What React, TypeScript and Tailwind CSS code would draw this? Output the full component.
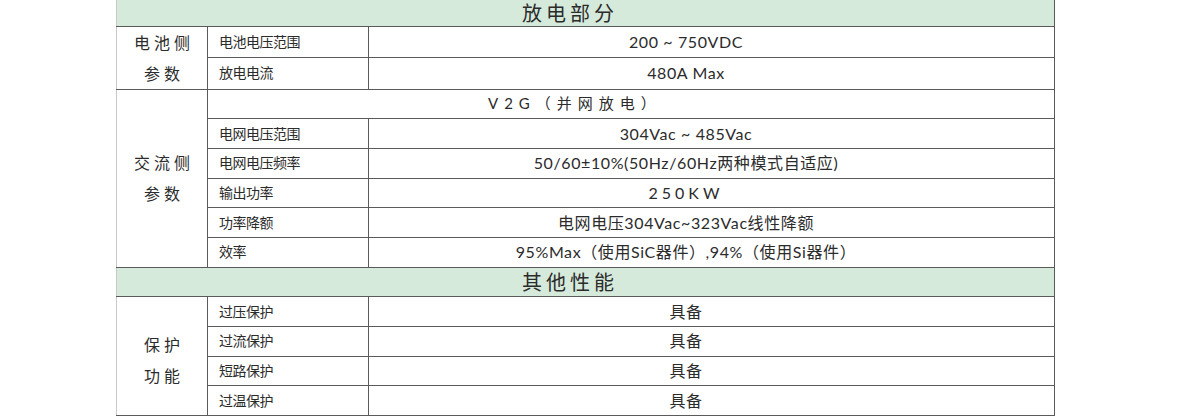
import React from 'react';

const font = { fontFamily: '"Lato", "Noto Sans CJK SC", sans-serif' };

const line = "border border-[#5a5a5a]";

const Header = ({ title, first }: { title: string; first?: boolean }) => (
  <tr className={first ? "h-[26px]" : "h-[29.7px]"}>
    <td colSpan={3} className={`${line} border-l-[#c8c8c8] ${first ? "border-t-0" : ""} bg-[#d6eadb] text-center text-[20px] tracking-[4px] pr-[31px] leading-none`}>
      {title}
    </td>
  </tr>
);

const Row = ({ label, value, group }: { label: string; value: React.ReactNode; group?: React.ReactNode }) => (
  <tr className="h-[29.7px]">
    {group}
    <td className={`${line} pl-[11px] text-[14px] tracking-[-0.5px] leading-none`}>{label}</td>
    <td className={`${line} text-center text-[16px] tracking-[0.6px] pr-[51px] leading-none`}>{value}</td>
  </tr>
);

const Group = ({ rows, lines, className = "" }: { rows: number; lines: string[]; className?: string }) => (
  <td rowSpan={rows} className={`${line} border-l-[#c8c8c8] text-center text-[16px] tracking-[4px] leading-[31px] align-middle ${className}`}>
    {lines.map((l) => (
      <div key={l} className="pl-[4px]">{l}</div>
    ))}
  </td>
);

export default function App() {
  return (
    <div className="bg-white w-[1201px] h-[417px] overflow-hidden text-[#2b2b2b]" style={font}>
      <table className="ml-[116px] w-[939px] border-collapse table-fixed">
        <colgroup>
          <col className="w-[91px]" />
          <col className="w-[161px]" />
          <col />
        </colgroup>
        <tbody>
          <Header title="放电部分" first />
          <Row label="电池电压范围" value="200 ~ 750VDC" group={<Group rows={2} lines={["电池侧", "参数"]} />} />
          <Row label="放电电流" value="480A Max" />
          <tr className="h-[29.7px]">
            <Group rows={6} lines={["交流侧", "参数"]} />
            <td colSpan={2} className={`${line} text-[15px] tracking-[6px] leading-none pl-[280px]`}>
              V2G（并网放电）
            </td>
          </tr>
          <Row label="电网电压范围" value="304Vac ~ 485Vac" />
          <Row label="电网电压频率" value="50/60±10%(50Hz/60Hz两种模式自适应)" />
          <Row label="输出功率" value={<span className="tracking-[4px]">250KW</span>} />
          <Row label="功率降额" value="电网电压304Vac~323Vac线性降额" />
          <Row label="效率" value="95%Max（使用SiC器件）,94%（使用Si器件）" />
          <Header title="其他性能" />
          <Row label="过压保护" value="具备" group={<Group rows={4} lines={["保护", "功能"]} className="pt-[8px]" />} />
          <Row label="过流保护" value="具备" />
          <Row label="短路保护" value="具备" />
          <Row label="过温保护" value="具备" />
        </tbody>
      </table>
    </div>
  );
}
